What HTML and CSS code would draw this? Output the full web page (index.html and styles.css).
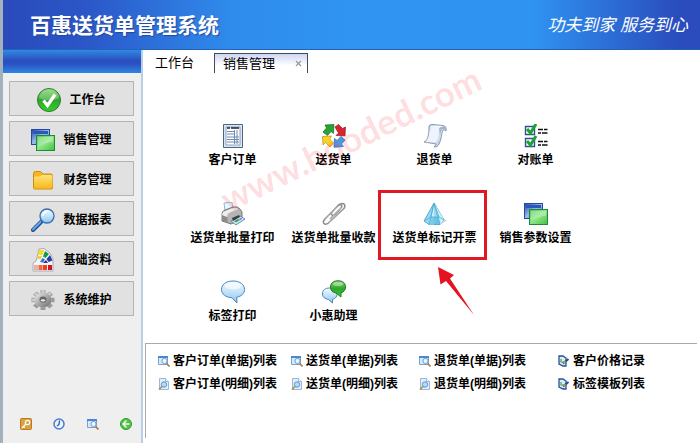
FILE: index.html
```html
<!DOCTYPE html>
<html lang="zh-CN">
<head>
  <meta charset="UTF-8" />
  <meta name="viewport" content="width=device-width, initial-scale=1.0"/>
  <title>百惠送货单管理系统</title>
  <link rel="stylesheet" href="styles.css">
</head>
<body>

<svg class="sprite" aria-hidden="true">
  <defs>
    <linearGradient id="g-green" x1="0" y1="0" x2="0" y2="1"><stop offset="0" stop-color="#7fd06a"/><stop offset=".5" stop-color="#2fa52c"/><stop offset="1" stop-color="#35cf2c"/></linearGradient>
    <linearGradient id="g-lime" x1="0" y1="0" x2="1" y2="1"><stop offset="0" stop-color="#4fc65a"/><stop offset=".5" stop-color="#8be684"/><stop offset="1" stop-color="#3fc03f"/></linearGradient>
    <linearGradient id="g-blue" x1="0" y1="0" x2="1" y2="1"><stop offset="0" stop-color="#1f48a8"/><stop offset=".5" stop-color="#9cbcf0"/><stop offset="1" stop-color="#2c5cc0"/></linearGradient>
    <linearGradient id="g-gold" x1="0" y1="0" x2="0" y2="1"><stop offset="0" stop-color="#ffe27a"/><stop offset="1" stop-color="#f8b818"/></linearGradient>
    <linearGradient id="g-steel" x1="0" y1="0" x2="1" y2="1"><stop offset="0" stop-color="#f0f0f0"/><stop offset=".5" stop-color="#a8a8a8"/><stop offset="1" stop-color="#6c6c6c"/></linearGradient>
    <linearGradient id="g-sky" x1="0" y1="0" x2="0" y2="1"><stop offset="0" stop-color="#f2faff"/><stop offset=".5" stop-color="#c3e2fa"/><stop offset="1" stop-color="#8cc4f0"/></linearGradient>
    <linearGradient id="g-page" x1="0" y1="0" x2="1" y2="1"><stop offset="0" stop-color="#8fa4c8"/><stop offset=".35" stop-color="#f8fbff"/><stop offset="1" stop-color="#a8b8d4"/></linearGradient>
  </defs>

  <symbol id="i-check" viewBox="0 0 24 24">
    <circle cx="12" cy="12" r="11.5" fill="url(#g-green)" stroke="#2a7f2a"/>
    <path d="M2 10a10 9 0 0 1 20 0c-6 3-13 3-20 0z" fill="#fff" opacity=".25"/>
    <path d="M6.5 12.5l4 5 7.5-11" fill="none" stroke="#fff" stroke-width="3.2"/>
  </symbol>
  <symbol id="i-windows" viewBox="0 0 24 24">
    <rect x=".5" y="1.5" width="18" height="15" fill="url(#g-blue)" stroke="#24489a"/>
    <rect x="2" y="3" width="15" height="3" fill="#2b57b8"/>
    <rect x="5.500" y="7.500" width="18" height="15" fill="url(#g-lime)" stroke="#1f8a35"/>
    <path d="M7 9h15v5c-6 0-10 2-15 5z" fill="#fff" opacity=".3"/>
  </symbol>
  <symbol id="i-folder" viewBox="0 0 24 24">
    <path d="M2.500 19V5.500q0-2 2-2h5l2.500 2.500h8q1.500 0 1.500 1.500V20q0 1-1 1H3.500q-1 0-1-2z" fill="#f5b620" stroke="#c88a14"/>
    <path d="M3 9.500q0-1 1-1h5l2-1.500h9q1.500 0 1.500 1.500V19q0 1.500-1.500 1.500H4.500Q3 20.500 3 19z" fill="url(#g-gold)"/>
  </symbol>
  <symbol id="i-search" viewBox="0 0 24 24">
    <path d="M2 22l8-8" stroke="#1c4f94" stroke-width="4" stroke-linecap="round"/>
    <path d="M2 21.500l7.500-7.500" stroke="#68a8e8" stroke-width="2" stroke-linecap="round"/>
    <circle cx="16" cy="8" r="7" fill="url(#g-sky)" stroke="#3a6cae" stroke-width="1.300"/>
    <path d="M12 8q0-4 4-4.500" fill="none" stroke="#fff" stroke-width="1.500"/>
  </symbol>
  <symbol id="i-swatch" viewBox="0 0 24 24">
    <path d="M5 13L8 1l5-.5 6 4.500 3 6v12H2V15z" fill="#f4f4f4" stroke="#b0a8b4"/>
    <path d="M8 2l5 0-1.500 5H7z" fill="#f4e11c"/><path d="M6.500 8h4.500l-1 3H6z" fill="#e8d060"/>
    <path d="M14 3l4 3-3.500 4-2.500-1.500z" fill="#169a4c"/><path d="M19 7l2.500 5.500-4 1.500-2-3z" fill="#2440a8"/>
    <path d="M11.500 10l2.500 1.500-2 3-3-.5z" fill="#2e78cc"/><path d="M15 12l2 3-5 0z" fill="#3b2c8c"/>
    <path d="M3 17h4v5H3z" fill="#e4b4a4"/><path d="M7.500 17h4v5h-4z" fill="#ec6848"/><path d="M12 17h4v5h-4z" fill="#f04028"/><path d="M17 17h4v5h-4z" fill="#c81820"/>
  </symbol>
  <symbol id="i-gear" viewBox="0 0 24 24">
    <g transform="translate(12 12) scale(1 .86)">
      <g stroke="#9a9a9a" stroke-width="5">
        <path d="M0-11.500v23M-11.500 0h23M-8.200-8.200l16.400 16.400M8.200-8.200l-16.400 16.400"/>
      </g>
      <g stroke="#c9c9c9" stroke-width="3.500">
        <path d="M0-11.500v20M-11.500 0h20M-8.200-8.200l14 14M7.500-8.200l-14 14"/>
      </g>
      <circle r="8.500" fill="url(#g-steel)"/>
      <circle cy="-.5" r="3.500" fill="#666"/><path d="M-2.600.5a3 2.500 0 0 1 5.200 0 3.200 3.200 0 0 1-5.200 0z" fill="#eee"/>
    </g>
  </symbol>

  <symbol id="i-form" viewBox="0 0 24 24">
    <path d="M2.500.5h19v23h-19z" fill="#d5e6f6" stroke="#4f6578"/>
    <path d="M5 3h14v18H5z" fill="#fff" stroke="#7890a8" stroke-width=".8"/>
    <path d="M6 4h3m1 0h8" stroke="#223" stroke-width="1.500"/>
    <path d="M6 7.500h7M6 10h7M6 13h12M6 15.500h12M6 18h12M13.500 6v14M16 6v14" stroke="#6c8cb4"/>
  </symbol>
  <symbol id="i-cycle" viewBox="0 0 24 24">
    <path d="M3 1l9-.5-.5 9-2.500-2-3.500 4L1 8l3.500-4z" fill="#27a436" stroke="#176d22" stroke-width=".7"/>
    <path d="M13 3l3.500-2.500 4 4L23.500 3 23 12l-9-.5 2.500-2.500z" fill="#d8262c" stroke="#961a20" stroke-width=".7"/>
    <path d="M12.500 14.500l2.500 2 4-4 4 3.500-3.500 4 2 2.500-9.500.8z" fill="#4d98e0" stroke="#2866a4" stroke-width=".7"/>
    <path d="M.5 12.500l9-.5-2 3 4 4L8 23l-4.500-4.500L1 21z" fill="#fad226" stroke="#b88e18" stroke-width=".7"/>
  </symbol>
  <symbol id="i-scroll" viewBox="0 0 24 24">
    <path d="M6 2q1-2 4-1.500l10 1Q24 2 23 7q-2-2-3-1c-2 4-1 9-4 14-1 2-2 3-5 3 2-2 2-3 2-3L1 18c5-2 5-11 5-16z" fill="url(#g-page)" stroke="#73839f" stroke-width=".8"/>
    <path d="M7.500 2c1 6-.5 12-4 15l9 1.500c4-4 2-10 5-14 1-1 2-1.500 3-1.500z" fill="#eef4fd"/>
    <path d="M16 4.500q2-2.500 5-2 2 .5 1.500 3.500-2.500-2-4 0-1 2-1.500 6z" fill="#8899bb" opacity=".7"/>
  </symbol>
  <symbol id="i-tasks" viewBox="0 0 24 24">
    <path d="M1.500 2.500h9v8h-9zM1.500 14.500h9v8h-9z" fill="#fff" stroke="#32508c" stroke-width="1.400"/>
    <path d="M3 5l3.500 4L12 0M3 17l3.500 4L12 12" fill="none" stroke="#1da035" stroke-width="3"/>
    <path d="M14 5.500h5m1 0h3.500M14 9h3m1 0h5.500M14 17.500h5m1 0h3.500M14 21h3m1 0h5.500" stroke="#111" stroke-width="1.600"/>
  </symbol>
  <symbol id="i-printer" viewBox="0 0 24 24">
    <path d="M3 1l8-1 1 8-8 1z" fill="#eaf5fe" stroke="#76a8cc" stroke-width=".8"/>
    <path d="M1 12q0-3 3-4l8-3q5-1 7 2l2 3v7L10 22l-9-3z" fill="#b4b4b4" stroke="#5e5e5e" stroke-width=".8"/>
    <path d="M2 10l10-4q3-1 5 1l-9 4q-2 1-2 4l-5-2z" fill="#ededed"/>
    <path d="M1.500 13.500l5 2v4.500l-5-1.500z" fill="#8a8a8a"/>
    <path d="M10 19l9-5 5 3-9 6z" fill="#cfe4f7" stroke="#5076a8" stroke-width=".8"/>
    <path d="M11 16l7-3 1 2-7 4z" fill="#3b4048"/><path d="M13 19l4-2 2 1-4 2.500z" fill="#3da848"/><path d="M18 17l2-1 1 1-2 1z" fill="#4070d0"/>
  </symbol>
  <symbol id="i-clip" viewBox="0 0 24 24">
    <path d="M8 17L19 6q1.500-2 .3-3-1.300-1-3.300.8L2.500 17.500q-2 2.500-.5 4t4.500-.5L21.500 7q2.500-3 .5-5-2.500-1.500-5.500 1L10.500 9.500q-2 2.500-.5 3.500t3.500-1L18 7.500" fill="none" stroke="#8a8a8a" stroke-width="1.500"/>
    <path d="M8.300 16.700L19 6M3 17.500L16 4.300M7 21L21.500 7.500" fill="none" stroke="#d4d4d4" stroke-width=".6"/>
  </symbol>
  <symbol id="i-prism" viewBox="0 0 24 24">
    <path d="M17 22l7-3-5-4z" fill="#999" opacity=".4"/>
    <path d="M11 1L1 19l5 3.500h11L21 18z" fill="#9bd8f1" stroke="#3b9cc6" stroke-width=".8"/>
    <path d="M11 1L6 22.500h5zM11 1l6 21.500L21 18z" fill="#cdeefb"/>
    <path d="M11 1L6 22.500M11 1l6 21.500M11 1L8 15m3-14l5 14M1 19l7-4h8l5 3" fill="none" stroke="#4aaed3" stroke-width=".8"/>
    <path d="M8 15h8l1 7.500H6z" fill="#4bb4db" opacity=".6"/>
  </symbol>
  <symbol id="i-bubble" viewBox="0 0 24 24">
    <path d="M12 1C5 1 .5 4.500.5 9.500c0 4.500 4 7.800 10.500 8.300l5 5.200-.3-5.800c5-1 7.800-3.700 7.800-7.700C23.500 4.500 19 1 12 1z" fill="url(#g-sky)" stroke="#4a86bc"/>
    <ellipse cx="12" cy="6" rx="8" ry="3.500" fill="#fff" opacity=".6"/>
  </symbol>
  <symbol id="i-chat" viewBox="0 0 24 24">
    <path d="M7.500 8C3 8 .5 10 .5 14c0 3 2.500 5 6 5.500l4 3.500v-3.700c3-.8 4.500-2.500 4.500-5.300 0-4-3-6-7.500-6z" fill="url(#g-sky)" stroke="#4a86bc"/>
    <path d="M16 .8C11 .8 8.500 3.500 8.500 7s2 5.500 5.500 6l5 4v-4.300c3-.7 4.500-2.700 4.500-5.700C23.500 3 21 .8 16 .8z" fill="url(#g-green)" stroke="#1f7d27"/>
    <ellipse cx="16" cy="4" rx="5" ry="2" fill="#fff" opacity=".4"/>
  </symbol>

  <symbol id="i-find" viewBox="0 0 12 12">
    <path d="M.5 1.500h9v8h-9z" fill="#d8eafa" stroke="#7aa4cc"/>
    <path d="M0 1h10v2H0z" fill="#4788d4"/>
    <circle cx="6.500" cy="6" r="2.600" fill="#eff8ff" stroke="#6b9ccc"/>
    <path d="M8.500 8.500l3 3" stroke="#a97b42" stroke-width="1.600"/>
  </symbol>
  <symbol id="i-detail" viewBox="0 0 12 12">
    <path d="M1.500.5h6l3 3v8h-9z" fill="#e3effb" stroke="#9ab8d6"/>
    <path d="M7.500.5v3h3" fill="#fff" stroke="#9ab8d6"/>
    <circle cx="6" cy="6.500" r="2.700" fill="#b4dcf9" stroke="#5896ce"/>
    <path d="M4 8.500l-3 3" stroke="#b88448" stroke-width="1.600"/>
  </symbol>
  <symbol id="i-note" viewBox="0 0 12 12">
    <path d="M1 1h4l3 2v8H5L1 9z" fill="#d9eafa" stroke="#23538f" stroke-width="1.300"/>
    <path d="M3 4v3h3" fill="none" stroke="#5b9c4c" stroke-width="1.200"/>
    <path d="M5 8.500L10.500 4" stroke="#234b84" stroke-width="2"/><path d="M5.500 8l2-1.500" stroke="#e0b44c" stroke-width="1.300"/>
  </symbol>
  <symbol id="i-key" viewBox="0 0 12 12">
    <rect x=".5" y=".5" width="11" height="11" rx="1" fill="#dca040" stroke="#b87824"/>
    <circle cx="7.500" cy="4.500" r="2.200" fill="none" stroke="#fff" stroke-width="1.200"/>
    <path d="M6 6l-4 4M3.500 8.500l1.200 1.200" stroke="#fff" stroke-width="1.200"/>
  </symbol>
  <symbol id="i-clock" viewBox="0 0 12 12">
    <circle cx="6" cy="6" r="5" fill="#e8f4ff" stroke="#4c7ccc" stroke-width="1.500"/>
    <path d="M6.500 2.500L6 6.500 4 8" fill="none" stroke="#2c58a4" stroke-width="1.300"/>
  </symbol>
  <symbol id="i-back" viewBox="0 0 12 12">
    <circle cx="6" cy="6" r="5.500" fill="#54c04a" stroke="#309a30"/>
    <path d="M9.500 6h-6M6.500 2.500L3 6l3.500 3.500" fill="none" stroke="#e8ffe4" stroke-width="1.500"/>
  </symbol>
</svg>

<header class="header">
  <h1 class="title">百惠送货单管理系统</h1>
  <p class="slogan">功夫到家 服务到心</p>
</header>

<div class="layout">
  <aside class="sidebar">
    <div class="sidebar-band"></div>
    <nav class="menu">
      <button class="menu-item"><svg class="icon"><use href="#i-check"/></svg>工作台</button>
      <button class="menu-item"><svg class="icon"><use href="#i-windows"/></svg>销售管理</button>
      <button class="menu-item"><svg class="icon"><use href="#i-folder"/></svg>财务管理</button>
      <button class="menu-item"><svg class="icon"><use href="#i-search"/></svg>数据报表</button>
      <button class="menu-item"><svg class="icon"><use href="#i-swatch"/></svg>基础资料</button>
      <button class="menu-item"><svg class="icon"><use href="#i-gear"/></svg>系统维护</button>
    </nav>
    <div class="tools">
      <button class="tool" aria-label="密码"><svg class="icon-small"><use href="#i-key"/></svg></button>
      <button class="tool" aria-label="时间"><svg class="icon-small"><use href="#i-clock"/></svg></button>
      <button class="tool" aria-label="查询"><svg class="icon-small"><use href="#i-find"/></svg></button>
      <button class="tool" aria-label="返回"><svg class="icon-small"><use href="#i-back"/></svg></button>
    </div>
  </aside>

  <main class="main">
    <div class="tabs">
      <button class="tab">工作台</button>
      <div class="tab tab-active">
        <button class="tab-name">销售管理</button>
        <button class="tab-close" aria-label="关闭"><svg class="icon-close" viewBox="0 0 7 7"><path d="M1 1l5 5M6 1L1 6" stroke="#999" stroke-width="1.200"/></svg></button>
      </div>
    </div>

    <div class="launcher">
      <button class="app"><svg class="icon"><use href="#i-form"/></svg>客户订单</button>
      <button class="app"><svg class="icon"><use href="#i-cycle"/></svg>送货单</button>
      <button class="app"><svg class="icon"><use href="#i-scroll"/></svg>退货单</button>
      <button class="app"><svg class="icon"><use href="#i-tasks"/></svg>对账单</button>
      <button class="app"><svg class="icon"><use href="#i-printer"/></svg>送货单批量打印</button>
      <button class="app"><svg class="icon"><use href="#i-clip"/></svg>送货单批量收款</button>
      <div class="marked">
        <button class="app"><svg class="icon"><use href="#i-prism"/></svg>送货单标记开票</button>
        <span class="mark-box"></span>
        <svg class="mark-arrow" viewBox="0 0 36 48"><path d="M0 0l16 8-4 3.500L36 48 8 14l-5.500 3.500z" fill="#e3141f"/></svg>
      </div>
      <button class="app"><svg class="icon"><use href="#i-windows"/></svg>销售参数设置</button>
      <button class="app"><svg class="icon"><use href="#i-bubble"/></svg>标签打印</button>
      <button class="app"><svg class="icon"><use href="#i-chat"/></svg>小惠助理</button>
    </div>

    <div class="lists">
      <a class="list-link" href="#"><svg class="icon-small"><use href="#i-find"/></svg>客户订单(单据)列表</a>
      <a class="list-link" href="#"><svg class="icon-small"><use href="#i-find"/></svg>送货单(单据)列表</a>
      <a class="list-link" href="#"><svg class="icon-small"><use href="#i-find"/></svg>退货单(单据)列表</a>
      <a class="list-link" href="#"><svg class="icon-small"><use href="#i-note"/></svg>客户价格记录</a>
      <a class="list-link" href="#"><svg class="icon-small"><use href="#i-detail"/></svg>客户订单(明细)列表</a>
      <a class="list-link" href="#"><svg class="icon-small"><use href="#i-detail"/></svg>送货单(明细)列表</a>
      <a class="list-link" href="#"><svg class="icon-small"><use href="#i-detail"/></svg>退货单(明细)列表</a>
      <a class="list-link" href="#"><svg class="icon-small"><use href="#i-note"/></svg>标签模板列表</a>
    </div>

    <div class="watermark">www.hooded.com</div>
  </main>
</div>

</body>
</html>
```
FILE: styles.css
```css
* { box-sizing: border-box; margin: 0; padding: 0; }
body {
  display: flex;
  flex-direction: column;
  min-height: 100vh;
  font-family: "Liberation Sans", "Noto Sans CJK SC", sans-serif;
  font-size: 12px;
  line-height: 16px;
  color: #000;
  background: #fff;
  border-left: 3px solid #a3b1bd;
}

button {
  font: inherit;
  color: inherit;
  background: none;
  border: none;
  cursor: pointer;
}

.sprite {
  position: absolute;
  width: 0;
  height: 0;
}
.icon {
  width: 24px;
  height: 24px;
  flex: none;
}
.icon-small {
  width: 12px;
  height: 12px;
  flex: none;
}

.header {
  display: flex;
  align-items: center;
  justify-content: space-between;
  height: 50px;
  padding: 2px 12px 0 27px;
  color: #fff;
  background: linear-gradient(90deg, #2a4aba 0%, #2b57c8 12%, #2f8cec 33%, #2f94f2 50%, #2f93f2 76%, #2a4cbc 97%);
  border-bottom: 1px solid #2263b8;
}
.title {
  font-size: 21px;
  line-height: 28px;
  font-weight: bold;
  text-shadow: 1px 1px 1px #2348a0;
}
.slogan {
  font-size: 17px;
  line-height: 24px;
  font-style: italic;
}

.layout {
  flex: 1;
  display: flex;
}

.sidebar {
  display: flex;
  flex-direction: column;
  width: 140px;
  flex: none;
  background: #efefef;
  border-right: 2px solid #b9cfe9;
}
.sidebar-band {
  height: 23px;
  background: linear-gradient(#3089e6, #2a4fbe 45%, #2a51c0 60%, #2f86e4);
}
.menu {
  display: flex;
  flex-direction: column;
  gap: 5px;
  padding: 8px 7px 0 6px;
}
.menu-item {
  display: flex;
  align-items: center;
  justify-content: center;
  gap: 8px;
  height: 35px;
  padding-top: 2px;
  font-weight: bold;
  background: #e1e1e1;
  border: 1px solid #b4b4b4;
}
.tools {
  display: flex;
  justify-content: space-between;
  margin-top: auto;
  padding: 0 9px 13px 17px;
}
.tool {
  display: flex;
}

.main {
  position: relative;
  flex: 1;
  display: flex;
  flex-direction: column;
  min-width: 0;
  padding: 0 3px 5px 2px;
}
.tabs {
  display: flex;
  align-items: flex-end;
  gap: 20px;
  height: 23px;
  padding-left: 10px;
  font-size: 13px;
}
.tab {
  height: 20px;
}
.tab-active {
  display: flex;
  align-items: center;
  justify-content: space-between;
  width: 94px;
  padding: 0 5px 0 8px;
  background: linear-gradient(#ccd6f4, #fff 60%);
  border: 1px solid #444a5c;
  border-bottom: none;
}
.tab-close {
  display: flex;
}
.icon-close {
  width: 7px;
  height: 7px;
}

.launcher {
  flex: 1;
  display: grid;
  grid-template-columns: repeat(4, minmax(90px, 101px));
  align-content: start;
  row-gap: 34px;
  padding: 51px 0 19px 37px;
}
.app {
  display: flex;
  flex-direction: column;
  align-items: center;
  gap: 4px;
  width: 100%;
  font-weight: bold;
  white-space: nowrap;
}

/* red frame and arrow over the marked entry */
.marked {
  position: relative;
}
.mark-box {
  position: absolute;
  inset: -12px -2px -14px -6px;
  border: 3px solid #e01822;
  pointer-events: none;
}
.mark-arrow {
  position: absolute;
  left: 54px;
  top: 65px;
  width: 36px;
  height: 48px;
}

.lists {
  display: grid;
  grid-template-columns: 133px 128px 139px 1fr;
  align-content: start;
  row-gap: 7px;
  min-height: 95px;
  padding: 9px 0 0 12px;
  border-top: 1px solid #a9a9a9;
  border-left: 1px solid #a9a9a9;
}
.list-link {
  display: flex;
  align-items: center;
  gap: 3px;
  font-weight: bold;
  color: #000;
  text-decoration: none;
  white-space: nowrap;
}

.watermark {
  position: absolute;
  left: 65px;
  top: 68px;
  font-family: Lato, "Open Sans", sans-serif;
  font-size: 35px;
  font-weight: bold;
  line-height: 40px;
  color: rgba(250, 50, 60, 0.16);
  transform: rotate(-26deg);
  pointer-events: none;
}
```
